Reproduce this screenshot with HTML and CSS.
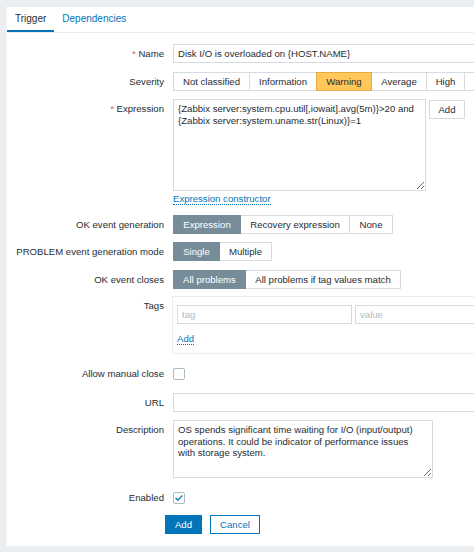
FILE: index.html
```html
<!DOCTYPE html>
<html lang="en">
<head>
<meta charset="utf-8">
<title>Trigger</title>
<link rel="stylesheet" href="styles.css">
</head>
<body>
<div class="page">
  <div class="panel">
    <div class="tabs">
      <a class="tab active">Trigger</a>
      <a class="tab">Dependencies</a>
    </div>
    <form class="form">
      <div class="row mb9">
        <label class="lbl"><span class="req">*</span> Name</label>
        <div class="field"><input class="text wide" type="text" value="Disk I/O is overloaded on {HOST.NAME}"></div>
      </div>
      <div class="row">
        <label class="lbl">Severity</label>
        <div class="field">
          <div class="radios">
            <span class="opt w77">Not classified</span>
            <span class="opt w68">Information</span>
            <span class="opt warning w56">Warning</span>
            <span class="opt w56">Average</span>
            <span class="opt w39">High</span>
            <span class="opt w60">Disaster</span>
          </div>
        </div>
      </div>
      <div class="row mb9">
        <label class="lbl"><span class="req">*</span> Expression</label>
        <div class="field">
          <div class="expr">
            <textarea class="area expr-area">{Zabbix server:system.cpu.util[,iowait].avg(5m)}&gt;20 and
{Zabbix server:system.uname.str(Linux)}=1</textarea>
            <button type="button" class="btn-grey">Add</button>
          </div>
          <div class="linkline"><a class="link">Expression constructor</a></div>
        </div>
      </div>
      <div class="row">
        <label class="lbl">OK event generation</label>
        <div class="field">
          <div class="radios">
            <span class="opt on w68">Expression</span>
            <span class="opt w110">Recovery expression</span>
            <span class="opt w44">None</span>
          </div>
        </div>
      </div>
      <div class="row mb9">
        <label class="lbl">PROBLEM event generation mode</label>
        <div class="field">
          <div class="radios">
            <span class="opt on w47">Single</span>
            <span class="opt w53">Multiple</span>
          </div>
        </div>
      </div>
      <div class="row mb7">
        <label class="lbl">OK event closes</label>
        <div class="field">
          <div class="radios">
            <span class="opt on w73">All problems</span>
            <span class="opt w156">All problems if tag values match</span>
          </div>
        </div>
      </div>
      <div class="row mb10">
        <label class="lbl">Tags</label>
        <div class="field">
          <div class="tagbox">
            <div class="tagrow">
              <input class="text tag" type="text" placeholder="tag">
              <input class="text val" type="text" placeholder="value">
            </div>
            <div class="addline"><a class="link">Add</a></div>
          </div>
        </div>
      </div>
      <div class="row mb10">
        <label class="lbl">Allow manual close</label>
        <div class="field center"><span class="check"></span></div>
      </div>
      <div class="row">
        <label class="lbl">URL</label>
        <div class="field"><input class="text wide" type="text" value=""></div>
      </div>
      <div class="row mb10">
        <label class="lbl">Description</label>
        <div class="field"><textarea class="area desc-area">OS spends significant time waiting for I/O (input/output) operations. It could be indicator of performance issues with storage system.</textarea></div>
      </div>
      <div class="row">
        <label class="lbl">Enabled</label>
        <div class="field center">
          <span class="check checked"><svg viewBox="0 0 12 12" width="10" height="10"><path d="M2.3 6.2 L4.8 8.6 L9.6 3.4" fill="none" stroke="#0275b8" stroke-width="1.6" stroke-linecap="round" stroke-linejoin="round"/></svg></span>
        </div>
      </div>
      <div class="row last">
        <span class="lbl"></span>
        <div class="field actions">
          <button type="button" class="btn-primary">Add</button>
          <button type="button" class="btn-alt">Cancel</button>
        </div>
      </div>
    </form>
  </div>
</div>
</body>
</html>
```
FILE: styles.css
```css
html, body {
  margin: 0;
  padding: 0;
}
body {
  background: #ebeef0;
  font-family: "Liberation Sans", Arial, sans-serif;
  font-size: 9.6px;
  color: #1f2c33;
  overflow: hidden;
  width: 474px;
  height: 552px;
}
.page {
  padding: 7px 0 0 7px;
}
.panel {
  background: #ffffff;
  width: 620px;
  padding-bottom: 12px;
  box-shadow: -1px 0 0 #f4f6f7;
}
.tabs {
  display: flex;
  height: 25px;
  border-bottom: 1px solid #ebeef0;
}
.tab {
  display: block;
  padding: 0 8px;
  line-height: 23px;
  height: 23px;
  border-bottom: 2px solid transparent;
  color: #0275b8;
  cursor: pointer;
  font-size: 10px;
}
.tab.active {
  color: #1f2c33;
  border-bottom-color: #0275b8;
}
.form {
  display: block;
  margin: 0;
  padding-top: 11px;
}
.row {
  display: grid;
  grid-template-columns: 157px 1fr;
  column-gap: 9px;
  margin-bottom: 8px;
}
.row.mb7 { margin-bottom: 7px; }
.row.mb9 { margin-bottom: 9px; }
.row.mb10 { margin-bottom: 10px; }
.row.last { margin-bottom: 0; }
.lbl {
  text-align: right;
  line-height: 19px;
  white-space: nowrap;
}
.req {
  color: #e45959;
}
.field {
  min-height: 19px;
}
.field.center {
  display: flex;
  align-items: center;
}
.text {
  box-sizing: border-box;
  height: 19px;
  border: 1px solid #d5dbde;
  padding: 0 4px;
  font: inherit;
  color: #1f2c33;
  background: #fff;
  outline: none;
  margin: 0;
}
.text::placeholder {
  color: #acbbc2;
}
.text.wide {
  width: 460px;
}
.radios {
  display: inline-flex;
}
.opt {
  box-sizing: border-box;
  height: 19px;
  line-height: 17px;
  padding: 0;
  text-align: center;
  border: 1px solid #d5dbde;
  margin-left: -1px;
  background: #fff;
  white-space: nowrap;
  flex: none;
}
.opt:first-child {
  margin-left: 0;
}
.w39 { width: 39px; }
.w44 { width: 44px; }
.w47 { width: 47px; }
.w53 { width: 53px; }
.w56 { width: 56px; }
.w60 { width: 60px; }
.w68 { width: 68px; }
.w73 { width: 73px; }
.w77 { width: 77px; }
.w110 { width: 110px; }
.w156 { width: 156px; }
.opt.on {
  background: #768d99;
  border-color: #768d99;
  color: #fff;
  position: relative;
}
.opt.warning {
  background: #ffc859;
  border-color: #e8a948;
  position: relative;
}
.expr {
  display: flex;
  align-items: flex-start;
  gap: 3px;
}
.area {
  box-sizing: border-box;
  border: 1px solid #d5dbde;
  padding: 3px 4px;
  font: inherit;
  line-height: 11.5px;
  color: #1f2c33;
  background: #fff;
  margin: 0;
  outline: none;
  resize: vertical;
  display: block;
}
.expr-area {
  width: 253px;
  height: 92px;
}
.desc-area {
  width: 260px;
  height: 58px;
}
.btn-grey {
  box-sizing: border-box;
  width: 36px;
  height: 19px;
  padding: 0;
  border: 1px solid #d5dbde;
  background: #fff;
  color: #1f2c33;
  font: inherit;
  margin: 1px 0 0 0;
}
.link {
  color: #0275b8;
  border-bottom: 1px dotted #0275b8;
  cursor: pointer;
}
.linkline {
  margin-top: 2px;
  line-height: 12px;
  height: 13px;
}
.tagbox {
  box-sizing: border-box;
  height: 58px;
  border: 1px solid #ebeef0;
  padding: 8px 4px 0 4px;
  margin-left: -1px;
}
.tagrow {
  display: flex;
  gap: 3px;
}
.text.tag {
  width: 175px;
}
.text.val {
  width: 175px;
}
.addline {
  margin-top: 9px;
  line-height: 12px;
}
.check {
  box-sizing: border-box;
  width: 12px;
  height: 12px;
  border: 1px solid #acbbc2;
  border-radius: 2px;
  background: #fff;
  display: flex;
  align-items: center;
  justify-content: center;
}
.actions {
  display: flex;
  gap: 8px;
  margin-left: -8px;
}
.btn-primary,
.btn-alt {
  box-sizing: border-box;
  height: 19px;
  padding: 0;
  font: inherit;
  margin: 0;
}
.btn-primary {
  width: 37px;
  background: #0275b8;
  border: 1px solid #0275b8;
  color: #fff;
}
.btn-alt {
  width: 50px;
  background: #fff;
  border: 1px solid #0275b8;
  color: #0275b8;
}
```
